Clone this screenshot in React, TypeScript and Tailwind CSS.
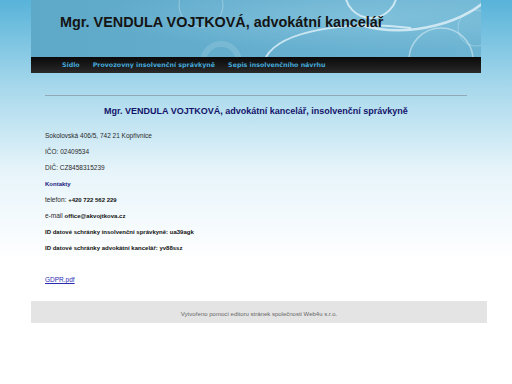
import React from 'react';

const NAV = ['Sídlo', 'Provozovny insolvenční správkyně', 'Sepis insolvenčního návrhu'];

function HeaderArt() {
  return (
    <svg className="absolute inset-0" width="450" height="57" viewBox="0 0 450 57">
      <defs>
        <radialGradient id="glow" cx="0.75" cy="0.3" r="0.6">
          <stop offset="0" stopColor="#8fcbe2" stopOpacity="0.6" />
          <stop offset="1" stopColor="#8fcbe2" stopOpacity="0" />
        </radialGradient>
      </defs>
      <rect width="450" height="57" fill="url(#glow)" />
      <g fill="none" stroke="#e8f6fb" strokeOpacity="0.75">
        <circle cx="340" cy="-8" r="26" strokeWidth="2" />
        <path d="M235 57 C 250 30, 320 20, 380 28" strokeWidth="2" />
        <path d="M330 25 C 380 40, 440 20, 460 -5" strokeWidth="2.5" />
        <circle cx="410" cy="60" r="32" strokeWidth="1.5" strokeOpacity="0.5" />
        <circle cx="170" cy="5" r="22" strokeWidth="1" strokeOpacity="0.35" />
        <circle cx="190" cy="62" r="18" strokeWidth="6" strokeOpacity="0.15" />
        <circle cx="445" cy="28" r="18" strokeWidth="1" strokeOpacity="0.3" />
      </g>
    </svg>
  );
}

export default function App() {
  return (
    <div
      className="min-h-[384px] w-[512px] bg-[linear-gradient(to_bottom,#58b3d9_0px,#a9d9ec_90px,#e6f4fa_170px,#ffffff_260px)]"
      style={{ fontFamily: '"Liberation Sans", Arial, sans-serif' }}
    >
      <div className="ml-[31px] w-[450px]">
        <div className="relative h-[57px] overflow-hidden bg-[linear-gradient(to_right,#5ea8c8,#66afcf_60%,#6cb4d2)]">
          <HeaderArt />
          <div className="relative pl-[29px] pt-[13px] text-[14.4px] font-bold leading-[18px] text-[#141414]">
            Mgr. VENDULA VOJTKOVÁ, advokátní kancelář
          </div>
        </div>
        <div
          className="flex h-[16px] items-center gap-[13px] bg-[linear-gradient(to_bottom,#0a0a0a,#1c1c1c_60%,#2a2a2a)] pl-[31px] text-[6.3px] font-bold text-[#44a8d8]"
          style={{ fontFamily: '"DejaVu Sans", Verdana, sans-serif' }}
        >
          {NAV.map((n) => (
            <span key={n}>{n}</span>
          ))}
        </div>
        <div className="mx-[14px] mt-[22px] h-px bg-[#8eaab6]" />
        <div className="mt-[9px] text-center text-[9px] font-bold leading-[12px] text-[#14146b]">
          Mgr. VENDULA VOJTKOVÁ, advokátní kancelář, insolvenční správkyně
        </div>
        <div className="mt-[11px] pl-[14px] text-[6.5px] leading-[16px] text-[#2a2a2a]">
          <div>Sokolovská 406/5, 742 21 Kopřivnice</div>
          <div>IČO: 02409534</div>
          <div>DIČ: CZ8458315239</div>
          <div className="text-[6px] font-bold text-[#1b1b80]">Kontakty</div>
          <div>
            telefon: <b className="text-[6px] text-[#111]">+420 722 562 229</b>
          </div>
          <div>
            e-mail <b className="text-[6px] text-[#111]">office@akvojtkova.cz</b>
          </div>
          <div className="text-[6px] font-bold text-[#111]">ID datové schránky insolvenční správkyně: ua39agk</div>
          <div className="text-[6px] font-bold text-[#111]">ID datové schránky advokátní kancelář: yv88ssz</div>
          <div className="mt-[16px] text-[#2b2bb0] underline">GDPR.pdf</div>
        </div>
      </div>
      <div className="ml-[31px] mt-[13px] flex h-[22px] w-[456px] items-center justify-center bg-[#e4e4e4] pt-[4px] text-[6px] text-[#666]">
        Vytvořeno pomocí editoru stránek společnosti Web4u s.r.o.
      </div>
    </div>
  );
}
